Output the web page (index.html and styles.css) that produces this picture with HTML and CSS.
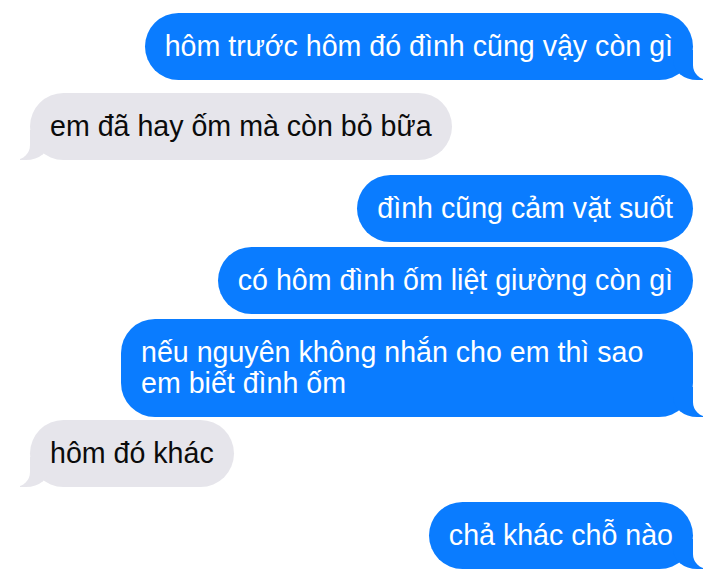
FILE: index.html
```html
<!DOCTYPE html>
<html lang="vi">
<head>
<meta charset="utf-8">
<title>Tin nhắn</title>
<link rel="stylesheet" href="styles.css">
</head>
<body>
<main class="thread">
  <div class="msg sent tail">hôm trước hôm đó đình cũng vậy còn gì</div>
  <div class="msg recv tail gap-a">em đã hay ốm mà còn bỏ bữa</div>
  <div class="msg sent gap-b">đình cũng cảm vặt suốt</div>
  <div class="msg sent">có hôm đình ốm liệt giường còn gì</div>
  <div class="msg sent tail">nếu nguyên không nhắn cho em thì sao em biết đình ốm</div>
  <div class="msg recv tail gap-c">hôm đó khác</div>
  <div class="msg sent tail gap-b">chả khác chỗ nào</div>
</main>
</body>
</html>
```
FILE: styles.css
```css
html, body {
  margin: 0;
  padding: 0;
  background: #ffffff;
}
body {
  font-family: "Liberation Sans", Arial, sans-serif;
  font-size: 28.6px;
  -webkit-font-smoothing: antialiased;
}
.thread {
  display: flex;
  flex-direction: column;
  gap: 5px;
  padding: 13px 26px 0 30px;
}
.msg {
  position: relative;
  max-width: 532px;
  padding: 18px 20px;
  line-height: 31px;
  border-radius: 34px;
}
.sent {
  align-self: flex-end;
  background: #0a7cff;
  color: #ffffff;
}
.recv {
  align-self: flex-start;
  background: #e6e5eb;
  color: #0b0b0b;
}
.gap-a { margin-top: 8px; }
.gap-b { margin-top: 10px; }
.gap-c { margin-top: -2px; }

/* bubble tails */
.tail::before,
.tail::after {
  content: "";
  position: absolute;
  bottom: 0;
  height: 30px;
}
.sent.tail::before {
  right: -10px;
  width: 30px;
  background: #0a7cff;
  border-bottom-left-radius: 24px 20px;
}
.sent.tail::after {
  right: -40px;
  width: 40px;
  background: #ffffff;
  border-bottom-left-radius: 15px;
}
.recv.tail::before {
  left: -10px;
  width: 30px;
  background: #e6e5eb;
  border-bottom-right-radius: 24px 20px;
}
.recv.tail::after {
  left: -40px;
  width: 40px;
  background: #ffffff;
  border-bottom-right-radius: 15px;
}
```
